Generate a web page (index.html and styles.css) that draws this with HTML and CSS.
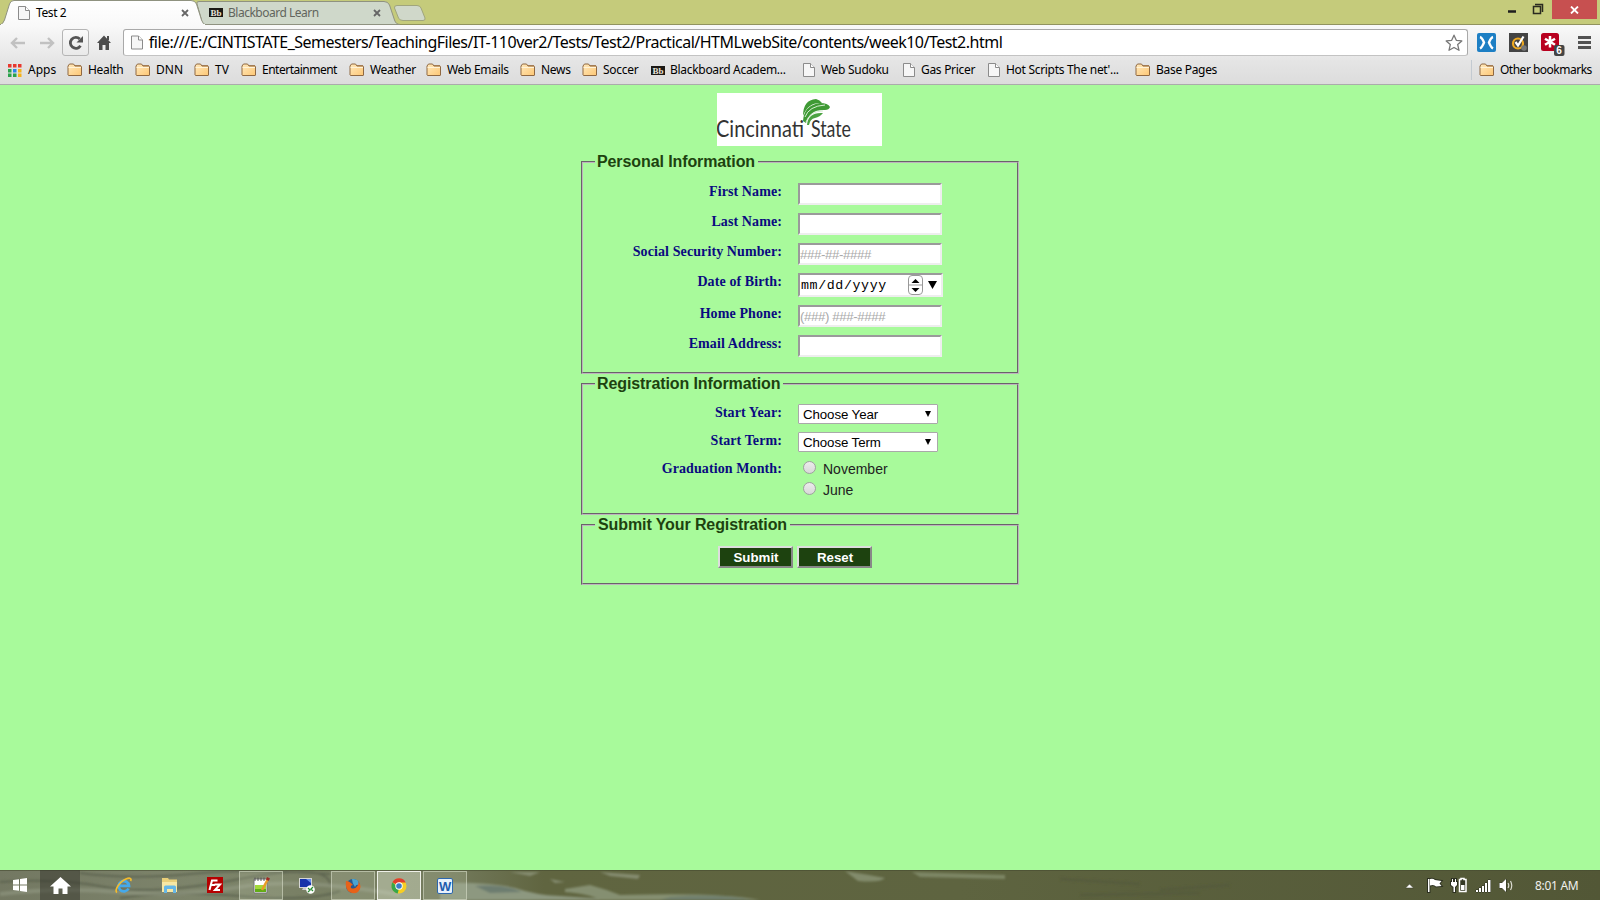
FILE: index.html
```html
<!DOCTYPE html>
<html lang="en">
<head>
    <meta charset="UTF-8">
    <title>Test 2</title>
    <link rel="stylesheet" href="styles.css">
</head>
<body>
    <!-- shared icons -->
    <svg class="defs" width="0" height="0">
        <defs>
            <linearGradient id="folderFill" x1="0" y1="0" x2="1" y2="1">
                <stop offset="0" stop-color="#ffe9bd"/>
                <stop offset="1" stop-color="#fdc774"/>
            </linearGradient>
            <linearGradient id="tabFill" x1="0" y1="0" x2="0" y2="1">
                <stop offset="0" stop-color="#ffffff"/>
                <stop offset="1" stop-color="#f9f9f9"/>
            </linearGradient>
            <symbol id="folder" viewBox="0 0 16 14">
                <path d="M1 12V3L2.5 1H6.5L8 3H13.5Q14.5 3 14.5 4V12Q14.5 12.5 14 12.5H1.5Z" fill="url(#folderFill)" stroke="#8f6842"/>
                <path d="M1.5 4.5H14" stroke="#fff3d8"/>
                <path d="M8 2.5H14" stroke="#a27b54"/>
            </symbol>
            <symbol id="page" viewBox="0 0 12 14">
                <path d="M.5 .5H7.5L11.5 4.5V13.5H.5Z" fill="#f6f6f6" stroke="#8b8b8b"/>
                <path d="M7.5 .5V4.5H11.5" fill="#fff" stroke="#8b8b8b"/>
            </symbol>
            <symbol id="bb" viewBox="0 0 14 9">
                <rect width="14" height="9" fill="#1b1915"/>
                <text x="1.5" y="8" font-family="Liberation Serif, serif" font-size="9" font-weight="bold" fill="#e8e4da">Bb</text>
            </symbol>
            <symbol id="close" viewBox="0 0 8 8">
                <path d="M1 1L7 7M7 1L1 7" stroke="#666" stroke-width="1.8"/>
            </symbol>
        </defs>
    </svg>

    <div class="tabstrip">
        <svg class="tab-shapes" width="440" height="25">
            <path d="M198 24.500Q203 24 201 18L197 4Q196 1.500 199 1.500H384Q388 1.500 389.500 5L394.500 20Q396 24.500 400 24.500Z" fill="#cfd8ca" stroke="#8f9280"/>
            <path d="M394.500 8Q394 5.500 397 5.500H417Q420 5.500 421 8L425 18Q425.500 20.500 423 20.500H403Q399.500 20.500 398.500 18Z" fill="#d0d8ca" stroke="#a0a57d"/>
            <path d="M0 25Q3 24 4.500 20L9.500 4Q10.500 .5 14 .5H191Q195 .5 196.500 4L201.500 20Q203 24.500 206 25Z" fill="url(#tabFill)" stroke="#8f9280"/>
            <path d="M1 25H205" stroke="#f9f9f9" stroke-width="2"/>
        </svg>
        <div class="tab tab-active">
            <svg width="12" height="14"><use href="#page"/></svg>
            <span class="tab-title">Test 2</span>
            <svg width="8" height="8"><use href="#close"/></svg>
        </div>
        <div class="tab tab-other">
            <svg width="14" height="9"><use href="#bb"/></svg>
            <span class="tab-title">Blackboard Learn</span>
            <svg width="8" height="8"><use href="#close"/></svg>
        </div>
        <div class="window-buttons">
            <svg width="52" height="19">
                <path d="M8 11.500H16" stroke="#1e1e1e" stroke-width="2.500"/>
                <path d="M33.500 6.500H40.500V13.500H33.500Z M35 4.500H42.500V12" fill="none" stroke="#2b2b20" stroke-width="1.500"/>
            </svg>
            <div class="win-close">
                <svg width="9" height="8"><path d="M1 .5L8 7.500M8 .5L1 7.500" stroke="#fff" stroke-width="1.800"/></svg>
            </div>
        </div>
    </div>

    <div class="toolbar">
        <div class="nav">
            <svg class="back" width="16" height="12"><path d="M15 6H2M7 1L2 6L7 11" fill="none" stroke="#c1c1c1" stroke-width="2.400"/></svg>
            <svg class="forward" width="16" height="12"><path d="M1 6H14M9 1L14 6L9 11" fill="none" stroke="#c1c1c1" stroke-width="2.400"/></svg>
            <div class="reload">
                <svg width="16" height="16"><path d="M12.500 10.800A5.500 5.500 0 1 1 11.800 4" fill="none" stroke="#555" stroke-width="2.800"/><path d="M15 1V7.500H8.500Z" fill="#555"/></svg>
            </div>
            <svg class="home" width="14" height="15"><path d="M7 .5L14 8H12V15H8.500V10H5.500V15H2V8H0Z" fill="#4d4d4d"/><path d="M10 1H12V5H10Z" fill="#4d4d4d"/></svg>
        </div>
        <div class="omnibox">
            <svg width="12" height="15"><use href="#page"/></svg>
            <span class="url">file:///E:/CINTISTATE_Semesters/TeachingFiles/IT-110ver2/Tests/Test2/Practical/HTMLwebSite/contents/week10/Test2.html</span>
            <svg class="star" width="18" height="18"><path d="M9 1.200L11.300 6.300L16.800 6.900L12.700 10.600L14 16.300L9 13.500L4 16.300L5.300 10.600L1.200 6.900L6.700 6.300Z" fill="#fff" stroke="#777" stroke-width="1.300" stroke-linejoin="round"/></svg>
        </div>
        <div class="extensions">
            <svg width="19" height="19"><rect width="19" height="19" rx="2" fill="#1d7fc4"/><path d="M3 4Q5 4.500 7 9.500Q5 14.500 3 15.500M16 4Q14 4.500 12 9.500Q14 14.500 16 15.500" fill="none" stroke="#fff" stroke-width="2.400"/></svg>
            <svg width="19" height="19"><rect width="19" height="19" fill="#444"/><circle cx="9" cy="10.500" r="5" fill="none" stroke="#efa920" stroke-width="2.200"/><path d="M6.500 9L9 12.500L14.500 3.500" fill="none" stroke="#fff" stroke-width="2.200"/><circle cx="15" cy="15" r="2.800" fill="#777"/></svg>
            <svg width="24" height="23"><rect width="18" height="18" rx="2.500" fill="#b8001f"/><path d="M9 3V14.500M4 5.800L14 11.800M14 5.800L4 11.800" stroke="#fff" stroke-width="2.500"/><rect x="13" y="12" width="10.500" height="11" rx="2" fill="#444"/><text x="15.200" y="21" font-family="Liberation Sans, sans-serif" font-size="10" font-weight="bold" fill="#fff">6</text></svg>
            <svg width="13" height="13"><path d="M0 1.500H13M0 6.500H13M0 11.500H13" stroke="#525252" stroke-width="2.800"/></svg>
        </div>
    </div>

    <div class="bookmarks">
        <div class="bm bm-apps">
            <svg width="14" height="13"><path d="M0 0h3.500v3.500h-3.500zM5 0h3.500v3.500h-3.500zM10 0h3.500v3.500h-3.500z" fill="#e8382f"/><path d="M0 5h3.500v3.500h-3.500zM0 9.500h3.500v3.500h-3.500zM5 9.500h3.500v3.500h-3.500z" fill="#2ba24c"/><path d="M5 5h3.500v3.500h-3.500z" fill="#2b86e8"/><path d="M10 5h3.500v3.500h-3.500zM10 9.500h3.500v3.500h-3.500z" fill="#f5b21a"/></svg>
            <span>Apps</span>
        </div>
        <div class="bm bm-health"><svg width="16" height="14"><use href="#folder"/></svg><span>Health</span></div>
        <div class="bm bm-dnn"><svg width="16" height="14"><use href="#folder"/></svg><span>DNN</span></div>
        <div class="bm bm-tv"><svg width="16" height="14"><use href="#folder"/></svg><span>TV</span></div>
        <div class="bm bm-entertainment"><svg width="16" height="14"><use href="#folder"/></svg><span>Entertainment</span></div>
        <div class="bm bm-weather"><svg width="16" height="14"><use href="#folder"/></svg><span>Weather</span></div>
        <div class="bm bm-emails"><svg width="16" height="14"><use href="#folder"/></svg><span>Web Emails</span></div>
        <div class="bm bm-news"><svg width="16" height="14"><use href="#folder"/></svg><span>News</span></div>
        <div class="bm bm-soccer"><svg width="16" height="14"><use href="#folder"/></svg><span>Soccer</span></div>
        <div class="bm bm-bb"><svg width="14" height="9"><use href="#bb"/></svg><span>Blackboard Academ...</span></div>
        <div class="bm bm-sudoku"><svg width="12" height="14"><use href="#page"/></svg><span>Web Sudoku</span></div>
        <div class="bm bm-gas"><svg width="12" height="14"><use href="#page"/></svg><span>Gas Pricer</span></div>
        <div class="bm bm-scripts"><svg width="12" height="14"><use href="#page"/></svg><span>Hot Scripts The net'...</span></div>
        <div class="bm bm-base"><svg width="16" height="14"><use href="#folder"/></svg><span>Base Pages</span></div>
        <div class="bm bm-other"><svg width="16" height="14"><use href="#folder"/></svg><span>Other bookmarks</span></div>
    </div>

    <div class="content">
        <svg class="logo" width="165" height="53">
            <rect width="165" height="53" fill="#fff"/>
            <text x="-1" y="44" font-family="Lato, sans-serif" font-size="23" fill="#333" textLength="88" lengthAdjust="spacingAndGlyphs">Cincinnati</text>
            <text x="94" y="44" font-family="Lato, sans-serif" font-size="23" fill="#333" textLength="40" lengthAdjust="spacingAndGlyphs">State</text>
            <path d="M86 23Q86 7 99 6Q103 7 105 10Q91 9 86 23Z" fill="#3f9a35"/>
            <path d="M86 28Q87 12 103 10Q111 10 113 14Q112 17 108 17Q93 16 89 30Z" fill="#3f9a35"/>
            <path d="M90 32Q91 19 106 20Q103 24 98 25Q93 26 92 32Z" fill="#4ba341"/>
            <path d="M88 24Q92 13 108 12M89 29Q93 18 106 18" fill="none" stroke="#d9efd5"/>
        </svg>
        <form>
            <fieldset class="personal">
                <legend>Personal Information</legend>
                <div class="row"><label for="fname">First Name:</label><input class="field" type="text" id="fname"></div>
                <div class="row"><label for="lname">Last Name:</label><input class="field" type="text" id="lname"></div>
                <div class="row"><label for="ssn">Social Security Number:</label><input class="field" type="text" id="ssn" placeholder="###-##-####"></div>
                <div class="row">
                    <label>Date of Birth:</label>
                    <div class="date">
                        <span>mm/dd/yyyy</span>
                        <svg width="15" height="20"><rect x=".5" y=".5" width="14" height="19" rx="3.500" fill="#fff" stroke="#999"/><path d="M1 10H14" stroke="#999"/><path d="M3.500 8L7.500 4L11.500 8ZM3.500 13L7.500 17L11.500 13Z" fill="#000"/></svg>
                        <svg class="date-arrow" width="9" height="8"><path d="M0 0H9L4.500 8Z" fill="#000"/></svg>
                    </div>
                </div>
                <div class="row"><label for="phone">Home Phone:</label><input class="field" type="text" id="phone" placeholder="(###) ###-####"></div>
                <div class="row"><label for="email">Email Address:</label><input class="field" type="text" id="email"></div>
            </fieldset>
            <fieldset class="registration">
                <legend>Registration Information</legend>
                <div class="row">
                    <label>Start Year:</label>
                    <div class="select"><span>Choose Year</span><svg width="6" height="6"><path d="M0 0H6L3 6Z" fill="#000"/></svg></div>
                </div>
                <div class="row">
                    <label>Start Term:</label>
                    <div class="select"><span>Choose Term</span><svg width="6" height="6"><path d="M0 0H6L3 6Z" fill="#000"/></svg></div>
                </div>
                <div class="row">
                    <label>Graduation Month:</label>
                    <div class="radios">
                        <div class="choice"><i class="radio"></i><span>November</span></div>
                        <div class="choice"><i class="radio"></i><span>June</span></div>
                    </div>
                </div>
            </fieldset>
            <fieldset class="submit">
                <legend>Submit Your Registration</legend>
                <div class="buttons">
                    <button type="button">Submit</button>
                    <button type="button">Reset</button>
                </div>
            </fieldset>
        </form>
    </div>

    <div class="taskbar">
        <!-- wallpaper showing through the bar -->
        <svg class="water" width="1600" height="30">
            <defs>
                <linearGradient id="water" x1="0" y1="0" x2="1" y2="0">
                    <stop offset="0" stop-color="#737862"/>
                    <stop offset=".12" stop-color="#7d846b"/>
                    <stop offset=".28" stop-color="#737a5c"/>
                    <stop offset=".34" stop-color="#606540"/>
                    <stop offset=".6" stop-color="#5e6440"/>
                    <stop offset="1" stop-color="#525736"/>
                </linearGradient>
                <filter id="soft"><feGaussianBlur stdDeviation="1.2"/></filter>
            </defs>
            <rect width="1600" height="30" fill="url(#water)"/>
            <g filter="url(#soft)">
                <path d="M0 12Q60 8 105 17T240 9T330 15M120 28Q170 20 240 26T340 21M80 3Q130 10 190 4T330 4" fill="none" stroke="#565d48" stroke-width="2" stroke-opacity=".7"/>
                <path d="M0 24Q60 17 120 22T240 17T400 25" fill="none" stroke="#929984" stroke-width="4" stroke-opacity=".6"/>
                <path d="M440 13Q490 12 515 18Q535 25 560 26L620 30H440Z" fill="#8d9880"/>
                <path d="M475 16Q505 14 522 22L490 23Z" fill="#6d7d70"/>
                <path d="M565 19L590 15Q605 19 620 25Q720 22 760 30H600Q590 24 565 22Z" fill="#858f71"/>
                <path d="M670 27Q720 23 752 30H660Z" fill="#71806e"/>
                <path d="M600 2L640 5L638 9L610 6ZM510 2H540L530 6ZM550 9L565 12L555 13Z" fill="#858c70"/>
                <path d="M845 1Q870 5 885 8Q880 13 858 11Z" fill="#828b6c"/>
                <path d="M912 2L1005 5V9L920 7Z" fill="#7d8665"/>
                <path d="M1060 9L1140 14M1160 20L1230 15M1080 25L1200 23" stroke="#54593a" stroke-width="3" stroke-opacity=".6"/>
            </g>
            <path d="M0 .5H1600" stroke="#464b31" stroke-opacity=".6"/>
        </svg>
        <div class="task-start">
            <svg width="14" height="14"><path d="M0 2L6 1.200V6.500H0ZM7 1L14 0V6.500H7ZM0 7.500H6V12.800L0 12ZM7 7.500H14V14L7 13Z" fill="#fff"/></svg>
        </div>
        <div class="task-home">
            <svg width="21" height="17"><path d="M10.500 0L21 9.500H17.500V17H12.500V11.500H8.500V17H3.500V9.500H0Z" fill="#fff"/></svg>
        </div>
        <div class="tasks">
            <div class="task">
                <svg width="17" height="17"><path d="M13.500 11.500A5.200 5.200 0 1 1 14 8.800H5" fill="none" stroke="#45a9ea" stroke-width="2.800"/><path d="M2 15.500C-1 14 4 5 11 2C15 .3 17 1.500 15.500 4" fill="none" stroke="#f2bb2e" stroke-width="1.700"/></svg>
            </div>
            <div class="task">
                <svg width="17" height="15"><path d="M1 0H7L8 1.500H16V14H1Z" fill="#e9cf79"/><path d="M1 4H16V14H1Z" fill="#f7e7a4"/><path d="M3 15V9Q3 7.500 4.500 7.500H13.500Q15 7.500 15 9V15H12V11H6V15Z" fill="#66b7e6"/></svg>
            </div>
            <div class="task">
                <svg width="16" height="16"><rect width="16" height="16" fill="#b50000"/><path d="M2.500 13L5 3.500H10.500M4 8H8M7.500 7.500H13L8 13H13" fill="none" stroke="#fff" stroke-width="2"/></svg>
            </div>
            <div class="task open">
                <svg width="17" height="17"><path d="M1 2H14V16H1Z" fill="#fff" stroke="#777"/><path d="M2 8H13V15H2Z" fill="#a3d93a"/><path d="M2 12H13V15H2Z" fill="#62ac17"/><path d="M2 .5V4M5 .5V4M8 .5V4M11 .5V4" stroke="#555"/><path d="M15 2L9 13" stroke="#e99c27" stroke-width="2.500"/><path d="M14 0L17 1.500L15.500 4L13 2.500Z" fill="#a02a25"/></svg>
            </div>
            <div class="task">
                <svg width="16" height="17"><rect x=".5" y="1.500" width="12" height="9" fill="#1733aa" stroke="#d5d5d5"/><path d="M7 2H12V6Z" fill="#648be9"/><path d="M4 11H9V13H3Z" fill="#ccc"/><circle cx="11.500" cy="12.500" r="4.300" fill="#fff"/><path d="M9 11L11 13L9 15M14 10L12 12L14 14" fill="none" stroke="#278b31" stroke-width="1.300"/></svg>
            </div>
            <div class="task open">
                <svg width="16" height="16"><circle cx="8" cy="8" r="7" fill="#275990"/><path d="M7 1Q14 0 14 7Q11 6 10 9Q7 5 7 1Z" fill="#4aa4d2"/><path d="M1 3Q4 3 6 5L8 7Q5 7 6 10Q10 12 13 7Q14 4 13 3Q18 9 13 14Q8 17 3 13Q0 10 1 3Z" fill="#e76218"/></svg>
            </div>
            <div class="task open current">
                <svg width="16" height="16"><circle cx="8" cy="8" r="7.500" fill="#f6ce23"/><path d="M8 8L1.400 4.300A7.500 7.500 0 0 1 14.700 4.500H8Z" fill="#df3e2e"/><path d="M1.400 4.300L8 10L6.700 15.400A7.500 7.500 0 0 1 1.400 4.300Z" fill="#38a64b"/><circle cx="8" cy="8" r="3.700" fill="#fff"/><circle cx="8" cy="8" r="2.800" fill="#3c7ec6"/></svg>
            </div>
            <div class="task open">
                <svg width="16" height="16"><rect x=".5" y=".5" width="15" height="15" rx="1.500" fill="#e7f1fb" stroke="#2c67ad"/><text x="2" y="13" font-family="Liberation Sans, sans-serif" font-size="13" font-weight="bold" fill="#1e5dae">W</text></svg>
            </div>
        </div>
        <div class="tray">
            <svg width="108" height="18">
                <path d="M.5 12L4.500 8L8.500 12Z" fill="#fff" stroke="#363a27" stroke-width=".5"/>
                <g stroke="#2c3020" fill="#fff" paint-order="stroke">
                    <path d="M23 3H24.500V16H23ZM25 3Q28 2 30 4L36.500 5L34.500 7.500L36.500 10L31 10.500Q29 8 25 9.500Z" stroke-width="2"/>
                    <path d="M47 3H48V6H50V3H51V6H52V9L50 11V16H48.500V11L46 9V6H47Z" stroke-width="2"/>
                </g>
                <path d="M54.500 3.500H56V2.500H59V3.500H61V15.500H54.500Z" fill="#343824" stroke="#fff" stroke-width="1.500"/>
                <path d="M56 9H59.500V14H56Z" fill="#fff"/>
                <path d="M71 14H73V16H71ZM74 12H76V16H74ZM77 10H79V16H77ZM80 7H82V16H80ZM83 4H85.500V16H83Z" fill="#fff" stroke="#2c3020" paint-order="stroke"/>
                <path d="M94.500 7H97L101 3V16L97 12H94.500Z" fill="#fff" stroke="#2c3020" paint-order="stroke"/>
                <path d="M103 7Q104.500 9.500 103 12M105.500 5Q108 9.500 105.500 14" fill="none" stroke="#dcdcd2" stroke-width="1.200"/>
            </svg>
            <span class="clock">8:01 AM</span>
        </div>
    </div>
</body>
</html>
```
FILE: styles.css
```css
* {
    box-sizing: border-box;
}
body {
    margin: 0;
    width: 1600px;
    height: 900px;
    overflow: hidden;
    display: flex;
    flex-direction: column;
    background: #a8fa9b;
    font-family: "Noto Sans", sans-serif;
    font-size: 12px;
}
svg {
    display: block;
    flex-shrink: 0;
}
.defs {
    position: absolute;
}

/* browser window */
.tabstrip {
    position: relative;
    display: flex;
    height: 25px;
    background: #c5cb7b;
    border-bottom: 1px solid #91935e;
}
.tab-shapes {
    position: absolute;
    left: 0;
    top: 0;
}
.tab {
    position: relative;
    display: flex;
    align-items: center;
    height: 25px;
    white-space: nowrap;
}
.tab-active {
    width: 200px;
    padding: 0 11px 0 18px;
}
.tab-other {
    width: 194px;
    padding: 0 13px 0 9px;
}
.tab-title {
    flex: 1;
    margin-left: 6px;
    letter-spacing: -0.4px;
}
.tab-other .tab-title {
    margin-left: 5px;
    color: #62655d;
    letter-spacing: -0.5px;
}
.window-buttons {
    display: flex;
    margin-left: auto;
    padding-right: 3px;
}
.win-close {
    display: flex;
    align-items: center;
    justify-content: center;
    width: 45px;
    height: 19px;
    background: #c75050;
}
.toolbar {
    display: flex;
    align-items: center;
    height: 35px;
    padding: 0 9px 0 10px;
    background: linear-gradient(#f9f9f9, #e6e6e6);
}
.nav {
    display: flex;
    align-items: center;
    width: 113px;
}
.forward {
    margin-left: 13px;
}
.reload {
    display: flex;
    align-items: center;
    justify-content: center;
    width: 27px;
    height: 27px;
    margin-left: 7px;
    border: 1px solid #b5b5b5;
    border-radius: 3px;
    background: linear-gradient(#fafafa, #e9e9e9);
}
.home {
    margin-left: 8px;
}
.omnibox {
    display: flex;
    align-items: center;
    width: 1347px;
    height: 27px;
    padding: 0 4px 0 7px;
    border: 1px solid #a9a9a9;
    border-bottom-color: #c3c3c3;
    border-radius: 3px;
    background: #fff;
}
.url {
    flex: 1;
    margin-left: 6px;
    padding-bottom: 1px;
    font-size: 16px;
    line-height: 22px;
    letter-spacing: -0.51px;
    white-space: nowrap;
}
.extensions {
    display: flex;
    align-items: center;
    margin-left: 9px;
    gap: 13px;
}
.extensions svg:nth-child(3) {
    margin-top: 4px;
}
.bookmarks {
    display: flex;
    height: 25px;
    padding-left: 8px;
    border-bottom: 1px solid #ababab;
    background: linear-gradient(#e5e5e5, #dcdcdc);
}
.bm {
    display: flex;
    align-items: center;
    height: 20px;
    gap: 5px;
    white-space: nowrap;
}
.bm span {
    padding-bottom: 1px;
    letter-spacing: -0.3px;
}
.bm-apps { width: 59px; gap: 6px; }
.bm-health { width: 68px; }
.bm-dnn { width: 59px; }
.bm-tv { width: 47px; }
.bm-entertainment { width: 108px; }
.bm-weather { width: 77px; }
.bm-emails { width: 94px; }
.bm-news { width: 62px; }
.bm-soccer { width: 69px; }
.bm-bb { width: 152px; }
.bm-sudoku { width: 100px; gap: 6px; }
.bm-gas { width: 85px; gap: 6px; }
.bm-scripts { width: 147px; gap: 6px; }
.bm-base { width: 80px; }
.bm-apps span, .bm-dnn span, .bm-tv span {
    letter-spacing: 0;
}
.bm-entertainment span, .bm-other span {
    letter-spacing: -0.5px;
}
.bm-other {
    margin-left: auto;
    width: 129px;
    padding-left: 7px;
    border-left: 1px solid #c3cad1;
}

/* form page */
.content {
    flex: 1;
    display: flex;
    flex-direction: column;
    align-items: center;
    padding-top: 8px;
}
.logo {
    margin-right: 1px;
}
form {
    width: 438px;
    margin-top: 7px;
}
fieldset {
    width: 438px;
    margin: 0 0 1px;
    padding: 0 12px;
    border: 2px groove #bdb3bd;
}
legend {
    height: 18px;
    padding: 0 3px 0 2px;
    color: #1d420f;
    font: bold 16px/18px "Liberation Sans", Arial, sans-serif;
    letter-spacing: -0.1px;
}
.personal { height: 221px; }
.registration { height: 140px; }
.submit { height: 69px; }
.submit legend { padding-left: 3px; }
.row {
    display: flex;
    gap: 16px;
    margin-bottom: 8px;
}
.personal legend + .row {
    margin-top: 12px;
}
.registration legend + .row {
    margin-top: 11px;
}
label {
    width: 187px;
    padding-top: 1px;
    color: #0a0a80;
    font: bold 14px/16px "Liberation Serif", "Times New Roman", serif;
    letter-spacing: 0.1px;
    text-align: right;
    white-space: nowrap;
}
.field {
    width: 144px;
    height: 22px;
    padding: 1px 0;
    border: 2px solid;
    border-color: #9a9a9a #eee #eee #9a9a9a;
    background: #fff;
    font: 13.3px "Liberation Sans", Arial, sans-serif;
}
.field::placeholder {
    color: #a9a9a9;
    letter-spacing: -0.4px;
}
.date {
    display: flex;
    align-items: center;
    width: 145px;
    height: 24px;
    padding-left: 1px;
    border: 2px solid;
    border-color: #9a9a9a #eee #eee #9a9a9a;
    background: #fff;
    font: 13.3px "Liberation Mono", "Courier New", monospace;
    letter-spacing: 0.6px;
}
.date span {
    width: 107px;
}
.date-arrow {
    margin-left: 5px;
}
.select {
    display: flex;
    align-items: center;
    justify-content: space-between;
    width: 140px;
    height: 20px;
    padding: 0 6px 0 4px;
    border: 1px solid #a9a9a9;
    border-radius: 1px;
    background: #fff;
    font: 13.3px "Liberation Sans", Arial, sans-serif;
    letter-spacing: -0.1px;
}
.select svg {
    margin-bottom: 1px;
}
.radios {
    padding-left: 5px;
}
.choice {
    display: flex;
    height: 21px;
    gap: 7px;
    color: #222;
    font: 14px/19px "Liberation Sans", Arial, sans-serif;
}
.radio {
    width: 13px;
    height: 13px;
    margin-top: 1px;
    border: 1px solid #a0a0a0;
    border-radius: 50%;
    background: linear-gradient(#ececec, #d8d8d8);
}
.buttons {
    display: flex;
    gap: 4px;
    margin: 12px 0 0 123px;
}
button {
    width: 75px;
    height: 22px;
    padding: 0 0 0 1px;
    border: 2px solid;
    border-color: #ddd #888 #888 #ddd;
    background: #1d420f;
    color: #fff;
    font: bold 13.3px "Liberation Sans", Arial, sans-serif;
}

/* taskbar */
.taskbar {
    position: relative;
    display: flex;
    height: 30px;
}
.water {
    position: absolute;
    left: 0;
    top: 0;
}
.task-start, .task-home, .task {
    position: relative;
    display: flex;
    align-items: center;
    justify-content: center;
    height: 30px;
}
.task-start {
    width: 40px;
    padding-right: 1px;
}
.task-home {
    width: 40px;
    background: rgba(50, 50, 42, 0.5);
}
.tasks {
    display: flex;
    gap: 2px;
    margin-left: 21px;
}
.task {
    width: 44px;
}
.open {
    height: 29px;
    margin-top: 1px;
    border: 1px solid rgba(220, 225, 205, 0.55);
    background: rgba(200, 210, 180, 0.2);
}
.current {
    border-color: #eef0e8;
    background: rgba(220, 228, 205, 0.45);
}
.tray {
    position: relative;
    display: flex;
    align-items: center;
    margin-left: auto;
    width: 195px;
}
.clock {
    margin-left: 22px;
    color: #f0f0ec;
    letter-spacing: -0.3px;
    white-space: nowrap;
}
```
